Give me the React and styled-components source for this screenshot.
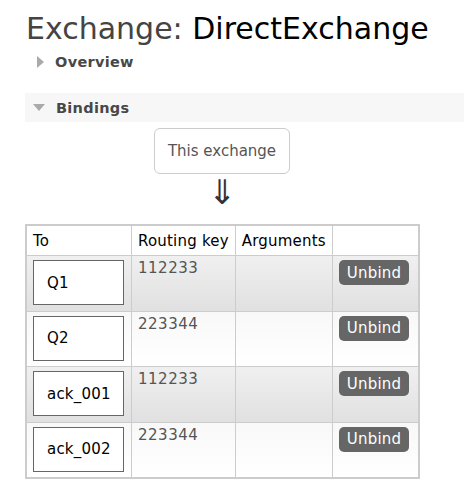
import React from "react";
import styled, { createGlobalStyle } from "styled-components";

const GlobalStyle = createGlobalStyle`
  html, body {
    margin: 0;
    padding: 0;
    background: #fff;
    font-family: "DejaVu Sans", Verdana, sans-serif;
  }
`;

const bindings = [
  { to: "Q1", key: "112233" },
  { to: "Q2", key: "223344" },
  { to: "ack_001", key: "112233" },
  { to: "ack_002", key: "223344" },
];

const Page = styled.div`
  padding: 11px 0 0 25px;
`;

const Title = styled.h1`
  margin: 0 0 0 1px;
  font-size: 30px;
  font-weight: normal;
  line-height: 36px;
  color: #444;
  b {
    font-weight: normal;
    color: #000;
  }
`;

const SectionHead = styled.div`
  display: flex;
  align-items: center;
  gap: 11px;
  height: 29px;
  padding-left: ${(p) => p.$indent}px;
  background: ${(p) => (p.$open ? "#f7f7f7" : "transparent")};
  font-size: 14.5px;
  letter-spacing: 0.3px;
  font-weight: bold;
  color: #484848;
`;

const Arrow = styled.span`
  width: 0;
  height: 0;
  ${(p) =>
    p.$open
      ? `border-left: 6px solid transparent;
         border-right: 6px solid transparent;
         border-top: 7px solid #aaa;`
      : `border-top: 6px solid transparent;
         border-bottom: 6px solid transparent;
         border-left: 7px solid #aaa;`}
`;

const Gap = styled.div`
  height: 17px;
`;

const Diagram = styled.div`
  display: flex;
  flex-direction: column;
  align-items: center;
  width: 394px;
  margin-top: 6px;
`;

const SourceBox = styled.div`
  padding: 13px 13px;
  border: 1px solid #ccc;
  border-radius: 6px;
  font-size: 15px;
  color: #555;
  line-height: 18px;
`;

const DownArrow = styled.div`
  font-size: 34px;
  line-height: 34px;
  color: #333;
  margin-top: 1px;
`;

const Table = styled.table`
  margin-top: 15px;
  border-collapse: collapse;
  border: 2px solid #ccc;
  width: 395px;
  font-size: 15px;
  letter-spacing: 0.2px;
`;

const Th = styled.th`
  text-align: left;
  font-weight: normal;
  color: #000;
  border: 1px solid #ccc;
  height: 29px;
  padding: 0 6px;
  width: ${(p) => p.$w}px;
  white-space: nowrap;
`;

const Row = styled.tr`
  height: 55.5px;
  background: ${(p) =>
    p.$odd
      ? "linear-gradient(#f0f0f0, #e0e0e0)"
      : "linear-gradient(#f8f8f8, #ffffff)"};
`;

const Td = styled.td`
  border: 1px solid #ccc;
  vertical-align: top;
  padding: 4px 6px;
  color: #555;
`;

const QueueBox = styled.div`
  width: 76px;
  height: 43px;
  padding-left: 13px;
  display: flex;
  align-items: center;
  background: #fff;
  border: 1px solid #666;
  color: #000;
`;

const KeyText = styled.div`
  letter-spacing: 0.5px;
  line-height: 16px;
`;

const UnbindButton = styled.button`
  height: 25px;
  padding: 0 8px;
  border: none;
  border-radius: 5px;
  background: #666;
  color: #fff;
  font-family: inherit;
  font-size: 15px;
  letter-spacing: 0.2px;
`;

export default function App() {
  return (
    <Page>
      <GlobalStyle />
      <Title>
        Exchange: <b>DirectExchange</b>
      </Title>
      <SectionHead $indent={12}>
        <Arrow />
        Overview
      </SectionHead>
      <Gap />
      <SectionHead $open $indent={8}>
        <Arrow $open />
        Bindings
      </SectionHead>
      <Diagram>
        <SourceBox>This exchange</SourceBox>
        <DownArrow>⇓</DownArrow>
      </Diagram>
      <Table>
        <thead>
          <tr>
            <Th $w={92}>To</Th>
            <Th $w={88}>Routing key</Th>
            <Th $w={80}>Arguments</Th>
            <Th />
          </tr>
        </thead>
        <tbody>
          {bindings.map((b, i) => (
            <Row key={b.to} $odd={i % 2 === 0}>
              <Td>
                <QueueBox>{b.to}</QueueBox>
              </Td>
              <Td>
                <KeyText>{b.key}</KeyText>
              </Td>
              <Td />
              <Td>
                <UnbindButton>Unbind</UnbindButton>
              </Td>
            </Row>
          ))}
        </tbody>
      </Table>
    </Page>
  );
}
